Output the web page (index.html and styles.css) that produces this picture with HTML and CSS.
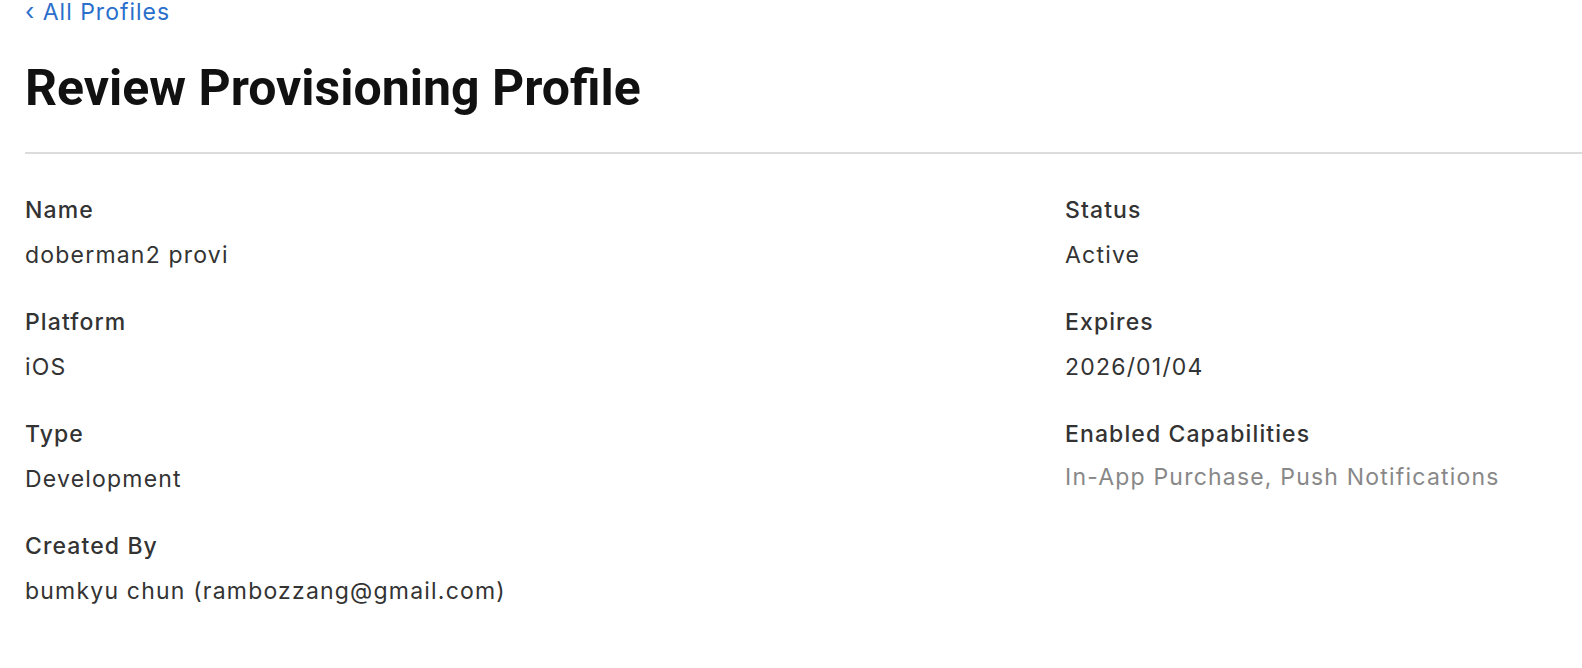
FILE: index.html
```html
<!DOCTYPE html>
<html lang="en">
<head>
<meta charset="utf-8">
<title>Review Provisioning Profile</title>
<link rel="stylesheet" href="styles.css">
</head>
<body>
<main class="page">
  <a class="back-link" href="#"><span class="chev">&#8249;</span> All Profiles</a>
  <h1 class="title">Review Provisioning Profile</h1>
  <hr class="divider">
  <section class="details">
    <div class="col">
      <div class="field"><div class="label">Name</div><div class="value">doberman2 provi</div></div>
      <div class="field"><div class="label">Platform</div><div class="value">iOS</div></div>
      <div class="field"><div class="label">Type</div><div class="value">Development</div></div>
      <div class="field"><div class="label">Created By</div><div class="value">bumkyu chun (rambozzang@gmail.com)</div></div>
    </div>
    <div class="col">
      <div class="field"><div class="label">Status</div><div class="value">Active</div></div>
      <div class="field"><div class="label">Expires</div><div class="value">2026/01/04</div></div>
      <div class="field"><div class="label">Enabled Capabilities</div><div class="value muted">In-App Purchase, Push Notifications</div></div>
    </div>
  </section>
</main>
</body>
</html>
```
FILE: styles.css
```css
html, body {
  margin: 0;
  padding: 0;
  background: #ffffff;
}
body {
  font-family: Inter, "Noto Sans", "Liberation Sans", sans-serif;
  color: #333333;
  overflow: hidden;
}
.page {
  padding: 0 0 0 25px;
}
.back-link {
  display: block;
  margin-top: -1px;
  font-size: 23px;
  line-height: 26px;
  letter-spacing: 1px;
  color: #2a6fcb;
  text-decoration: none;
}
.chev {
  font-size: 24px;
}
.title {
  margin: 35px 0 0 0;
  font-family: Roboto, Inter, sans-serif;
  font-weight: 700;
  font-size: 50px;
  line-height: 56px;
  color: #111111;
}
.divider {
  margin: 36px 0 0 0;
  border: 0;
  height: 2px;
  background: #dcdcdc;
}
.details {
  display: grid;
  grid-template-columns: 1040px 1fr;
  padding-top: 44px;
}
.field {
  margin-bottom: 42px;
}
.label {
  font-size: 23px;
  line-height: 25px;
  letter-spacing: 1.1px;
  font-weight: 500;
  color: #333333;
}
.value {
  margin-top: 20px;
  font-size: 23px;
  line-height: 25px;
  letter-spacing: 1.2px;
  color: #333333;
}
.value.muted {
  color: #888888;
  margin-top: 18px;
}
```
